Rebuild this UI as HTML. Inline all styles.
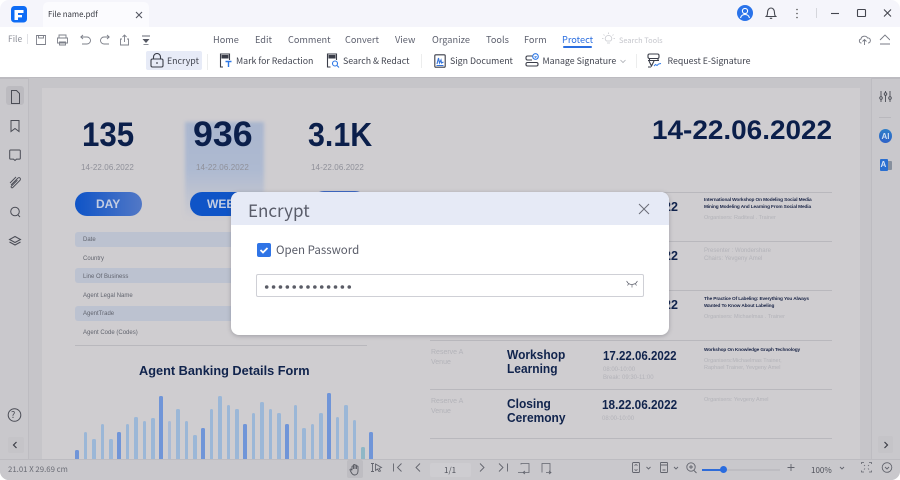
<!DOCTYPE html>
<html><head><meta charset="utf-8">
<style>
*{box-sizing:border-box}
html,body{margin:0;padding:0;width:900px;height:480px;overflow:hidden;background:#fff}
body{font-family:"Noto Sans CJK SC","Liberation Sans",sans-serif;position:relative}
.t,.d{position:absolute;white-space:nowrap}
.a{position:absolute}
#app{position:absolute;left:0;top:0;width:900px;height:480px;border-radius:9px;overflow:hidden;background:#fff}
.m{font-size:9.2px;line-height:14px;color:#5f6270;top:31.5px}
.r{font-size:8.8px;line-height:14px;color:#41444f;top:54px}
svg.i{position:absolute;fill:none;stroke:#555863;stroke-width:1.1}
#page{position:absolute;left:0;top:77px;width:900px;height:403px;background:#c9c8cc}
#doc .d{font-family:"Liberation Sans",sans-serif}
.big{font-weight:700;color:#0b1f4b;font-size:35px;line-height:40px;top:38px;transform-origin:0 50%}
.dt{font-size:8px;line-height:10px;color:#8f9099;top:85.5px;letter-spacing:.1px}
.lb{font-size:6px;line-height:8px;color:#62656f;left:83px}
.rw{position:absolute;left:75px;width:160px;height:15px;background:#bcc2d0;border-radius:3px}
.hl{position:absolute;left:430px;width:402px;height:1px;background:#b9b8bd}
.gr{font-size:6.5px;line-height:10px;color:#b3b3b9}
.bk{font-size:4.75px;line-height:7px;color:#1a2547;font-weight:700;letter-spacing:-.12px}
.tt{font-weight:700;font-size:13px;line-height:14px;color:#10234c;transform:scaleX(.92);transform-origin:0 0}
.dn{font-weight:700;font-size:12.5px;line-height:14px;color:#10234c}
.bar{position:absolute;width:3.6px;border-radius:1.5px 1.5px 0 0;background:#9bb7d7}
.bar.x{background:#7095d8}
</style></head>
<body>
<div id="app">
<!-- title bar -->
<div class="a" style="left:0;top:0;width:900px;height:27px;background:#f5f5fb"></div>
<div class="a" style="left:43px;top:2px;width:106px;height:25px;background:#fbfbfe;border-radius:5px 5px 0 0"></div>
<svg class="a" style="left:11px;top:6px" width="16" height="17" viewBox="0 0 16 17"><rect width="16" height="16.500" rx="3.500" fill="#0e6cf5"/><path d="M3.500 4h9v3H7v2h4v2.400H7V14H3.500z" fill="#fff"/></svg>
<div class="t" style="left:48px;top:8px;font-size:7.800px;line-height:14px;color:#34363f">File name.pdf</div>
<svg class="i" style="left:135px;top:11px" width="8" height="8" viewBox="0 0 8 8"><path d="M1 1l6 6M7 1L1 7"/></svg>
<div class="a" style="left:737px;top:5px;width:16px;height:16px;border-radius:50%;background:#2a73ea"></div>
<svg class="i" style="left:737px;top:5px;stroke:#fff" width="16" height="16" viewBox="0 0 16 16"><circle cx="8" cy="6" r="2.600"/><path d="M3.500 13c.6-2.600 2.400-3.500 4.500-3.500s3.900.9 4.500 3.500"/></svg>
<svg class="i" style="left:765px;top:6px;stroke:#44464f" width="12" height="14" viewBox="0 0 12 14"><path d="M1.200 10.500c1-.8 1.300-1.800 1.300-3.800C2.500 3.800 4 2 6 2s3.500 1.800 3.500 4.700c0 2 .3 3 1.300 3.800zM4.800 12.300h2.400"/></svg>
<svg class="a" style="left:795px;top:8px" width="4" height="11" viewBox="0 0 4 11"><circle cx="2" cy="1.500" r=".8" fill="#555"/><circle cx="2" cy="5.500" r=".8" fill="#555"/><circle cx="2" cy="9.500" r=".8" fill="#555"/></svg>
<div class="a" style="left:816px;top:8px;width:1px;height:10px;background:#d5d6dc"></div>
<svg class="i" style="left:830px;top:8px;stroke:#44464f" width="70" height="11" viewBox="0 0 70 11"><path d="M1 5.500h8"/><rect x="27.500" y="1.500" width="8" height="7" rx=".8"/><path d="M54 1.500l7 7M61 1.500l-7 7"/></svg>
<!-- menu -->
<div class="t m" style="left:8px;font-size:8.500px;color:#8a8c96">File</div>
<div class="a" style="left:27px;top:34px;width:1px;height:10px;background:#e1e2e6"></div>
<svg class="i" style="left:35px;top:33px;stroke:#7d808a;stroke-width:.9" width="122" height="14" viewBox="0 0 122 14">
<path d="M1.500 2.500h9v9h-9zM3.500 2.500v2.500h5V2.500"/>
<path d="M24 5V2h7v3M22.500 5h10v5h-10zM24.500 9h6v3h-6z"/>
<path d="M46 4h6a3.500 3.500 0 010 7h-5M48 2l-2.200 2L48 6"/>
<path d="M74 4h-5a3.500 3.500 0 000 7h5M72 2l2.200 2L72 6"/>
<path d="M87 6h-1.500v6h8V6H92M89.500 9V2M87.500 4l2-2 2 2"/>
<path d="M107 3h8" stroke-width="1.200"/><path d="M107.500 6h7l-3.500 4z" fill="#555863" stroke="none"/><path d="M108.500 11.500h5"/>
</svg>
<div class="t m" style="left:213px">Home</div>
<div class="t m" style="left:255px">Edit</div>
<div class="t m" style="left:288px">Comment</div>
<div class="t m" style="left:345px">Convert</div>
<div class="t m" style="left:395px">View</div>
<div class="t m" style="left:432px">Organize</div>
<div class="t m" style="left:486px">Tools</div>
<div class="t m" style="left:524px">Form</div>
<div class="t m" style="left:562px;color:#2c6fe0">Protect</div>
<div class="a" style="left:563px;top:46px;width:29px;height:1.500px;background:#2c6fe0;border-radius:1px"></div>
<svg class="i" style="left:602px;top:32px;stroke:#c9cad0;stroke-width:.8" width="13" height="13" viewBox="0 0 13 13"><path d="M4.500 9c-2.500-2-1-5.500 2-5.500s4.500 3.500 2 5.500zM5 11h3M6.500 .5v1.500M1.500 2.500l1 1M11.500 2.500l-1 1M0 6.500h1.500M11.500 6.500H13"/></svg>
<div class="t" style="left:619px;top:34px;font-size:7.400px;line-height:13px;color:#c5c6cc">Search Tools</div>
<svg class="i" style="left:858px;top:33px;stroke:#777a84;stroke-width:.9" width="32" height="13" viewBox="0 0 32 13"><path d="M3.500 10C1 10 .5 6.500 3 6c.3-3 5-4 6.500-1 2.500-.4 3.500 2 2.500 4-.3.600-1 1-2 1M6.500 12V6.500M4.500 8.500l2-2 2 2"/><path d="M22 7l5-5 5 5M22 11h10"/></svg>
<!-- ribbon -->
<div class="a" style="left:146px;top:51px;width:56px;height:19px;background:#e7ebf7;border-radius:2px"></div>
<svg class="i" style="left:150px;top:53px;stroke:#3a3d48" width="14" height="15" viewBox="0 0 14 15"><rect x="1" y="6" width="12" height="8" rx="1.500"/><path d="M3.500 6V4a3.500 3.500 0 017 0v2M7 9v2"/></svg>
<div class="t r" style="left:167px">Encrypt</div>
<div class="a" style="left:207px;top:54px;width:1px;height:16px;background:#eceded"></div>
<svg class="i" style="left:219px;top:53px;stroke:#3a3d48" width="13" height="15" viewBox="0 0 13 15"><path d="M4 14H1.500V1h9v6"/><path d="M3 2.500h6v2.500H3z" fill="#3a3d48"/><path d="M6.500 8.500h6M9.500 8.500V14" stroke="#2c77e6" stroke-width="1.400"/></svg>
<div class="t r" style="left:236px">Mark for Redaction</div>
<svg class="i" style="left:326px;top:53px;stroke:#3a3d48" width="14" height="15" viewBox="0 0 14 15"><path d="M4.500 14H1.500V1h9v6"/><path d="M3 2.500h6v2.500H3z" fill="#3a3d48"/><circle cx="9" cy="10.500" r="2.500" stroke="#2c77e6"/><path d="M11 12.500l2 2" stroke="#2c77e6"/></svg>
<div class="t r" style="left:343px">Search &amp; Redact</div>
<div class="a" style="left:421px;top:54px;width:1px;height:14px;background:#eceded"></div>
<svg class="i" style="left:434px;top:54px;stroke:#3a3d48" width="12" height="14" viewBox="0 0 12 14"><rect x=".8" y=".8" width="10.400" height="12.400" rx="1"/><path d="M3 10l1.500-6 1 5 1.500-3 .5 3 2-1M2.500 11.500h7" stroke="#3573d8"/></svg>
<div class="t r" style="left:450px">Sign Document</div>
<svg class="i" style="left:525px;top:53px;stroke:#3a3d48" width="14" height="15" viewBox="0 0 14 15"><path d="M8 3H2.500A1.500 1.500 0 001 4.500v1A1.500 1.500 0 002.500 7H7M2.500 9.500h9A1.500 1.500 0 0113 11v.5a1.500 1.500 0 01-1.500 1.500h-9A1.500 1.500 0 011 11.500V11a1.500 1.500 0 011.500-1.500z"/><circle cx="10.500" cy="3.500" r="2.800" stroke="#2c77e6"/><path d="M9.500 3.500l1 .8 1-1" stroke="#2c77e6"/></svg>
<div class="t r" style="left:542.500px">Manage Signature</div>
<svg class="i" style="left:620px;top:59px;stroke:#aaacb3;stroke-width:.8" width="6" height="5" viewBox="0 0 6 5"><path d="M.5 1l2.500 2.500L5.500 1"/></svg>
<div class="a" style="left:636px;top:54px;width:1px;height:14px;background:#eceded"></div>
<svg class="i" style="left:647px;top:53px;stroke:#3a3d48" width="15" height="15" viewBox="0 0 15 15"><rect x="1" y="1" width="11" height="4.500" rx="1.500"/><path d="M2.500 5.500v2H11V5.500M1 7.500h11M2 8l2.500 5L7 8M1 14h3"/><path d="M7 13l1.500-1.500 1.500 1 1.500-1.500 2.500-.5" stroke="#2c77e6" stroke-width=".9"/></svg>
<div class="t r" style="left:667.500px">Request E-Signature</div>
<!-- overlaid area -->
<div id="page">
  <div class="a" style="left:0;top:0;width:900px;height:1.500px;background:#bcbbc0"></div>
  <div class="a" style="left:28px;top:1px;width:843px;height:382px;background:#c6c5c9"></div>
  <div class="a" style="left:28px;top:0;width:1px;height:382px;background:#bdbcc1"></div>
  <div class="a" style="left:871px;top:0;width:1px;height:382px;background:#bdbcc1"></div>
  <div id="doc" class="a" style="left:0;top:0;width:900px;height:382px;overflow:hidden;filter:blur(.35px)">
    <div class="a" style="left:42px;top:11px;width:818px;height:371px;background:#cfcdd0"></div>
    <div class="a" style="left:185px;top:45px;width:79px;height:95px;filter:blur(1.500px);background:linear-gradient(#aab6ce 0%,#aebad1 50%,#cdcbd0 100%)"></div>
    <div class="d big" style="left:82px;font-size:34px;transform:scaleX(.92)">135</div>
    <div class="d big" style="left:193px;font-size:35px;transform:scaleX(1.02)">936</div>
    <div class="d big" style="left:308px;font-size:33px;transform:scaleX(.92)">3.1K</div>
    <div class="d big" style="left:652px;font-size:27px;top:33px;transform:scaleX(1.034)">14-22.06.2022</div>
    <div class="d dt" style="left:81px">14-22.06.2022</div>
    <div class="d dt" style="left:196px">14-22.06.2022</div>
    <div class="d dt" style="left:311px">14-22.06.2022</div>
    <div class="a" style="left:75px;top:115px;width:67px;height:23.500px;border-radius:12px;background:linear-gradient(90deg,#0f54c7,#5278c6)"></div>
    <div class="d" style="left:96px;top:118.500px;font-size:12px;line-height:16px;font-weight:700;color:#c3cde2">DAY</div>
    <div class="a" style="left:190px;top:115px;width:67px;height:23.500px;border-radius:12px;background:#0f54c7"></div>
    <div class="d" style="left:207px;top:118.500px;font-size:12px;line-height:16px;font-weight:700;color:#c3cde2">WEEK</div>
    <div class="a" style="left:312px;top:114px;width:55px;height:24px;border-radius:12px;background:#3c68c6"></div>
    <div class="rw" style="top:155px"></div>
    <div class="rw" style="top:191px"></div>
    <div class="rw" style="top:229px"></div>
    <div class="d lb" style="top:159px">Date</div>
    <div class="d lb" style="top:178px">Country</div>
    <div class="d lb" style="top:196px">Line Of Business</div>
    <div class="d lb" style="top:215px">Agent Legal Name</div>
    <div class="d lb" style="top:233px">AgentTrade</div>
    <div class="d lb" style="top:252px">Agent Code (Codes)</div>
    <div class="a" style="left:75px;top:268px;width:292px;height:1px;background:#b9b8bd"></div>
    <div class="d" style="left:139px;top:285px;font-size:13px;line-height:18px;font-weight:700;color:#10234c;transform:scaleX(.98);transform-origin:0 0">Agent Banking Details Form</div>

    <div class="hl" style="top:115px"></div>
    <div class="hl" style="top:164px"></div>
    <div class="hl" style="top:213px"></div>
    <div class="hl" style="top:263px"></div>
    <div class="hl" style="top:312px"></div>
    <div class="hl" style="top:361px"></div>
    <div class="d dn" style="left:664px;top:123px">22</div>
    <div class="d dn" style="left:664px;top:172px">22</div>
    <div class="d dn" style="left:664px;top:221px">22</div>
    <div class="d bk" style="left:704px;top:120px">International Workshop On Modeling Social Media</div>
    <div class="d bk" style="left:704px;top:127px">Mining Modeling And Learning From Social Media</div>
    <div class="d gr" style="left:704px;top:136px;font-size:5.500px">Organisers: Raditeal . Trainer</div>
    <div class="d gr" style="left:704px;top:169px;font-size:6px">Presenter : Wondershare</div>
    <div class="d gr" style="left:704px;top:177px;font-size:6px">Chairs: Yevgeny Amel</div>
    <div class="d bk" style="left:704px;top:219px">The Practice Of Labeling: Everything You Always</div>
    <div class="d bk" style="left:704px;top:226px">Wanted To Know About Labeling</div>
    <div class="d gr" style="left:704px;top:235px;font-size:5.500px">Organisers: Michaelmas . Trainer</div>

    <div class="d gr" style="left:431px;top:271px;font-size:7px">Reserve A</div>
    <div class="d gr" style="left:431px;top:281px;font-size:7px">Venue</div>
    <div class="d tt" style="left:507px;top:271px">Workshop</div>
    <div class="d tt" style="left:507px;top:285px">Learning</div>
    <div class="d dn" style="left:603px;top:272px;transform:scaleX(.92);transform-origin:0 0">17.22.06.2022</div>
    <div class="d gr" style="left:603px;top:288px;font-size:6px">08:00-10:00</div>
    <div class="d gr" style="left:603px;top:296px;font-size:6px">Break: 09:30-11:00</div>
    <div class="d bk" style="left:704px;top:270px">Workshop On Knowledge Graph Technology</div>
    <div class="d gr" style="left:704px;top:279px;font-size:5.500px">Organisers:Michaelmas Trainer,</div>
    <div class="d gr" style="left:704px;top:286px;font-size:5.500px">Raphael Trainer, Yevgeny Amel</div>
    <div class="d gr" style="left:431px;top:320px;font-size:7px">Reserve A</div>
    <div class="d gr" style="left:431px;top:330px;font-size:7px">Venue</div>
    <div class="d tt" style="left:507px;top:320px">Closing</div>
    <div class="d tt" style="left:507px;top:334px">Ceremony</div>
    <div class="d dn" style="left:602px;top:321px;transform:scaleX(.94);transform-origin:0 0">18.22.06.2022</div>
    <div class="d gr" style="left:602px;top:337px;font-size:6px">08:00-10:00</div>
    <div class="d gr" style="left:704px;top:318px;font-size:5.500px">Organisers: Yevgeny Amel</div>
    <!-- bars -->
    <div class="bar x" style="left:75.200px;top:373px;height:9px"></div>
    <div class="bar" style="left:83.500px;top:354.700px;height:27.300px"></div>
    <div class="bar" style="left:92px;top:362.300px;height:19.700px"></div>
    <div class="bar" style="left:100.500px;top:346.700px;height:35.300px"></div>
    <div class="bar" style="left:109px;top:362.300px;height:19.700px"></div>
    <div class="bar x" style="left:117.200px;top:354.700px;height:27.300px"></div>
    <div class="bar" style="left:125.500px;top:346.700px;height:35.300px"></div>
    <div class="bar" style="left:134px;top:339.700px;height:42.300px"></div>
    <div class="bar" style="left:142.500px;top:344.300px;height:37.700px"></div>
    <div class="bar" style="left:151px;top:341.300px;height:40.700px"></div>
    <div class="bar x" style="left:159.200px;top:318.700px;height:63.300px"></div>
    <div class="bar" style="left:167.500px;top:344.300px;height:37.700px;background:#a9bbd6"></div>
    <div class="bar" style="left:176px;top:331.700px;height:50.300px"></div>
    <div class="bar" style="left:184.500px;top:344.300px;height:37.700px"></div>
    <div class="bar" style="left:193px;top:358.300px;height:23.700px"></div>
    <div class="bar x" style="left:201.200px;top:351.300px;height:30.700px"></div>
    <div class="bar" style="left:209.500px;top:331.700px;height:50.300px"></div>
    <div class="bar" style="left:218px;top:318.700px;height:63.300px"></div>
    <div class="bar" style="left:226.500px;top:328.300px;height:53.700px"></div>
    <div class="bar" style="left:235px;top:331.700px;height:50.300px"></div>
    <div class="bar x" style="left:243.200px;top:346.700px;height:35.300px"></div>
    <div class="bar" style="left:251.500px;top:335.700px;height:46.300px"></div>
    <div class="bar" style="left:260px;top:324.700px;height:57.300px"></div>
    <div class="bar" style="left:268.500px;top:331.700px;height:50.300px"></div>
    <div class="bar" style="left:277px;top:335.700px;height:46.300px"></div>
    <div class="bar x" style="left:285.200px;top:346.700px;height:35.300px"></div>
    <div class="bar" style="left:293.500px;top:328.300px;height:53.700px"></div>
    <div class="bar" style="left:302px;top:351.300px;height:30.700px"></div>
    <div class="bar" style="left:310.500px;top:346.700px;height:35.300px"></div>
    <div class="bar" style="left:319px;top:335.700px;height:46.300px"></div>
    <div class="bar x" style="left:327.200px;top:316.300px;height:65.700px"></div>
    <div class="bar" style="left:335.500px;top:339.700px;height:42.300px"></div>
    <div class="bar" style="left:344px;top:328.300px;height:53.700px"></div>
    <div class="bar" style="left:352.500px;top:343px;height:39px"></div>
    <div class="bar" style="left:361px;top:369.700px;height:12.300px;background:#8fb7c6"></div>
    <div class="bar x" style="left:369.200px;top:354.700px;height:27.300px"></div>
  </div>
  <!-- left rail -->
  <div class="a" style="left:6px;top:9px;width:18px;height:19px;background:#bcbbc0;border-radius:3px"></div>
  <svg class="i" style="left:0;top:0;stroke:#4a4c55;stroke-width:1" width="30" height="380" viewBox="0 0 30 380">
    <path d="M11.500 13.500h5l3 3v10h-8z"/>
    <path d="M11 43.500h8v11l-4-3-4 3z"/>
    <path d="M10.500 73h9a.8.800 0 01.8.800v7.500a.8.800 0 01-.8.800h-3l-1.500 1.400-1.500-1.400h-3a.8.800 0 01-.8-.8v-7.500a.8.800 0 01.8-.8z"/>
    <path d="M11 108l6.500-6.500c2-2 4 .3 2.300 2l-7 7c-1 1-2.300-.3-1.400-1.300l6-6M10 106l6-6" stroke-width=".9"/>
    <circle cx="15" cy="134.500" r="4.300"/><path d="M18 138l2 2"/>
    <path d="M15 159.500l5.500 3-5.500 3-5.500-3zM9.500 165l5.500 3 5.500-3" />
    <circle cx="14.500" cy="338" r="6.300"/>
  </svg>
  <div class="t" style="left:11px;top:331px;font-size:9px;line-height:14px;color:#4a4c55">?</div>
  <div class="a" style="left:8px;top:360px;width:16px;height:16px;background:#c5c4c8;border-radius:2px"></div>
  <svg class="i" style="left:12px;top:364px;stroke:#3b3d46;stroke-width:1.200" width="6" height="8" viewBox="0 0 6 8"><path d="M4.500 1L1.500 4l3 3"/></svg>
  <!-- right rail -->
  <svg class="i" style="left:879px;top:13px;stroke:#4a4c55;stroke-width:.9" width="13" height="13" viewBox="0 0 13 13"><path d="M2 1v11M6.500 1v11M11 1v11"/><circle cx="2" cy="8" r="1.300" fill="#c9c8cc"/><circle cx="6.500" cy="4" r="1.300" fill="#c9c8cc"/><circle cx="11" cy="8" r="1.300" fill="#c9c8cc"/></svg>
  <div class="a" style="left:879px;top:40px;width:12px;height:1px;background:#b9b8bd"></div>
  <div class="a" style="left:879px;top:52px;width:13px;height:14px;border-radius:50%;background:linear-gradient(#2f7fc8,#2e62c8)"></div>
  <div class="t" style="left:881.500px;top:52.500px;font:700 8px/13px 'Liberation Sans',sans-serif;color:#cfe0f2">AI</div>
  <div class="a" style="left:885px;top:83.500px;width:7px;height:9px;background:#87909e;border-radius:1px"></div>
  <div class="a" style="left:879.500px;top:82px;width:8px;height:12px;background:#2a6fd0;border-radius:1px"></div>
  <div class="t" style="left:880.500px;top:82px;font:700 8px/12px 'Liberation Sans',sans-serif;color:#d6e3f5">A</div>
  <div class="a" style="left:878px;top:359px;width:15px;height:17px;background:#c5c4c8;border-radius:2px"></div>
  <svg class="i" style="left:883px;top:364px;stroke:#3b3d46;stroke-width:1.200" width="6" height="8" viewBox="0 0 6 8"><path d="M1.500 1l3 3-3 3"/></svg>
  <!-- status bar -->
  <div class="a" style="left:0;top:382px;width:900px;height:21px;background:#c9c8cc;border-top:1px solid #bdbcc1"></div>
  <div class="t" style="left:8px;top:387px;font-size:7.800px;line-height:12px;color:#6b6d76">21.01 X 29.69 cm</div>
  <div class="a" style="left:347px;top:383px;width:16px;height:18px;background:#bebdc2;border-radius:2px"></div>
  <svg class="i" style="left:349px;top:386px;stroke:#55575f;stroke-width:.9" width="12" height="13" viewBox="0 0 12 13"><path d="M3 7V3.500a.8.800 0 011.500 0M4.500 6V2a.8.800 0 011.500 0v4M6 6V2.500a.8.800 0 011.500 0V6M7.500 6V3.500a.8.800 0 011.500 0V8c0 2.500-1.500 4-3.500 4C4 12 3 11 2 9L1 7c-.3-.8.800-1.300 1.300-.6L3 7.500"/></svg>
  <svg class="i" style="left:370px;top:384px;stroke:#62646d;stroke-width:.9" width="210" height="14" viewBox="0 0 210 14">
    <path d="M1 2.500h3M1 10.500h3M2.500 2.500v8M5.500 3l6 3.500-2.500 1 1.500 2.500-1.500.5-1.500-2.500-2 1.500z"/>
    <path d="M23.500 2.500v8M31.500 2.500l-4 4 4 4"/>
    <path d="M50 2.500l-4 4 4 4"/>
    <path d="M110 2.500l4 4-4 4"/>
    <path d="M129 2.500l4 4-4 4M137.500 2.500v8"/>
    <path d="M151 3.500v-1h8v9h-6M155 10l-2 1.500 2 1.500M148 11.500h5" stroke-width=".8"/>
    <path d="M172 11.500v-9h8v9h-2M181 11.500h-5M179 10l2 1.500-2 1.500" stroke-width=".8"/>
  </svg>
  <div class="a" style="left:430px;top:386px;width:41px;height:14px;background:#cecdd1;border-radius:2px"></div>
  <div class="t" style="left:444px;top:387px;font-size:8px;line-height:13px;color:#4f515a">1/1</div>
  <svg class="i" style="left:630px;top:384px;stroke:#62646d;stroke-width:.9" width="265" height="14" viewBox="0 0 265 14">
    <rect x="2.500" y="1.500" width="7" height="10" rx="1"/><path d="M4.500 4.500L6 3.500l1.500 1M4.500 8.500l1.500 1 1.500-1M16.500 6l2 2 2-2"/>
    <rect x="30.500" y="1.500" width="7" height="10" rx=".6"/><path d="M31 4h6M32.500 9h3M44 6l2 2 2-2"/>
    <circle cx="61" cy="6" r="4.200"/><path d="M64 9.500l2.500 2.500M59 6h4M61 4v4"/>
    <path d="M157.500 6.500h7M161 3v7M210 6l2 2 2-2" />
    <path d="M231.500 3v-1.500h2.500M239 1.500h2.500V3M231.500 9.500V11H234M239 11h2.500V9.500M234 4l1 1M239 4l-1 1M234 8.500l1-1M239 8.500l-1-1" stroke-width=".8"/>
    <circle cx="257" cy="6.500" r="4.800"/><path d="M255 6l2 2 2-2"/>
  </svg>
  <div class="a" style="left:702px;top:392px;width:22px;height:1.500px;background:#2f6cd8"></div>
  <div class="a" style="left:724px;top:392px;width:56px;height:1.500px;background:#bebdc2"></div>
  <div class="a" style="left:720px;top:389px;width:7px;height:7px;border-radius:50%;background:#2a6cdf"></div>
  <div class="t" style="left:811px;top:387px;font-size:8px;line-height:13px;color:#4f515a">100%</div>
</div>
<!-- dialog -->
<div class="a" style="left:231px;top:192px;width:438px;height:143px;background:#fff;border-radius:8px;overflow:hidden;box-shadow:0 1px 4px rgba(70,70,80,.35)">
  <div class="a" style="left:0;top:0;width:438px;height:33px;background:#e6eaf6"></div>
  <div class="t" style="left:17px;top:6px;font-size:17px;line-height:24px;color:#595c69">Encrypt</div>
  <svg class="i" style="left:407px;top:11px;stroke:#6b6e79;stroke-width:1" width="12" height="12" viewBox="0 0 12 12"><path d="M1 1l10 10M11 1L1 11"/></svg>
  <svg class="a" style="left:26px;top:51px" width="14" height="14" viewBox="0 0 14 14"><rect width="14" height="14" rx="2" fill="#2f74e6"/><path d="M3.500 7l2.500 2.500 4.500-4.500" fill="none" stroke="#fff" stroke-width="1.800"/></svg>
  <div class="t" style="left:45px;top:48px;font-size:11.500px;line-height:20px;color:#5a5d69">Open Password</div>
  <div class="a" style="left:25px;top:82px;width:388px;height:23px;border:1px solid #cfd0d6;border-radius:2px;background:#fff"></div>
  <svg class="a" style="left:33px;top:91px" width="92" height="8" viewBox="0 0 92 8" fill="#5a5c66"><circle cx="2.700" cy="4" r="1.800"/><circle cx="9.580" cy="4" r="1.800"/><circle cx="16.460" cy="4" r="1.800"/><circle cx="23.340" cy="4" r="1.800"/><circle cx="30.220" cy="4" r="1.800"/><circle cx="37.100" cy="4" r="1.800"/><circle cx="43.980" cy="4" r="1.800"/><circle cx="50.860" cy="4" r="1.800"/><circle cx="57.740" cy="4" r="1.800"/><circle cx="64.620" cy="4" r="1.800"/><circle cx="71.500" cy="4" r="1.800"/><circle cx="78.380" cy="4" r="1.800"/><circle cx="85.260" cy="4" r="1.800"/></svg>
  <svg class="i" style="left:395px;top:88px;stroke:#666974;stroke-width:.7" width="12" height="9" viewBox="0 0 12 9"><path d="M1 2C2.500 3.800 4 4.500 6 4.500S9.500 3.800 11 2M.5 1l1.300 1.500M11.500 1l-1.300 1.500M2.800 3.500L1.500 5.500M9.200 3.500l1.300 2M6 4.500v3"/></svg>
</div>
</div>
</body></html>
